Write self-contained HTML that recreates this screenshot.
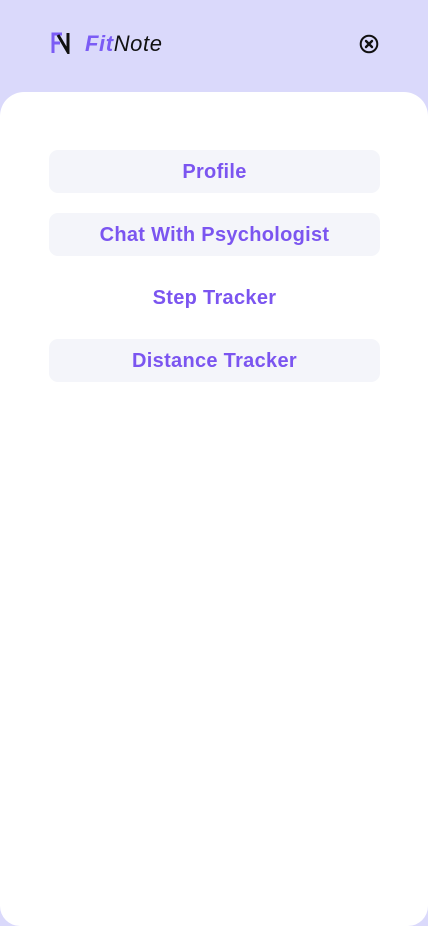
<!DOCTYPE html>
<html><head><meta charset="utf-8"><style>
*{margin:0;padding:0;box-sizing:border-box}
body{width:428px;height:926px;background:#dad9fb;font-family:"Liberation Sans",sans-serif;position:relative;overflow:hidden}
.brand{position:absolute;left:85px;top:31px;font-family:"Liberation Sans",sans-serif;font-style:italic;font-size:22px;letter-spacing:0.6px}
.brand .f{color:#7b5cf5;font-weight:bold}.brand .n{color:#111}
.close{position:absolute;left:359px;top:34px}
.panel{position:absolute;left:0;top:92px;width:428px;height:834px;background:#fff;border-radius:24px 24px 20px 20px}
.item{position:absolute;left:49px;width:331px;height:43px;border-radius:9px;color:#7b55f0;font-weight:bold;font-size:20px;letter-spacing:0.3px;text-align:center;line-height:45px}
.bg{background:#f4f5fa}
</style></head><body>
<svg width="20" height="22" viewBox="0 0 20 22" style="position:absolute;left:51px;top:32px">
<path d="M2 21V2h9" stroke="#7b5cf5" stroke-width="3" fill="none"/>
<path d="M2 11h7" stroke="#7b5cf5" stroke-width="3"/>
<path d="M7 3l10 17V1" stroke="#111" stroke-width="3" fill="none"/>
</svg>
<div class="brand"><span class="f">Fit</span><span class="n">Note</span></div>
<svg class="close" width="20" height="20" viewBox="0 0 20 20">
<circle cx="10" cy="10" r="8.3" stroke="#111" stroke-width="2" fill="none"/>
<path d="M7 7l6 6M13 7l-6 6" stroke="#111" stroke-width="2.4" stroke-linecap="round"/>
</svg>
<div class="panel"></div>
<div class="item bg" style="top:150px">Profile</div>
<div class="item bg" style="top:213px">Chat With Psychologist</div>
<div class="item" style="top:276px">Step Tracker</div>
<div class="item bg" style="top:339px">Distance Tracker</div>
</body></html>
